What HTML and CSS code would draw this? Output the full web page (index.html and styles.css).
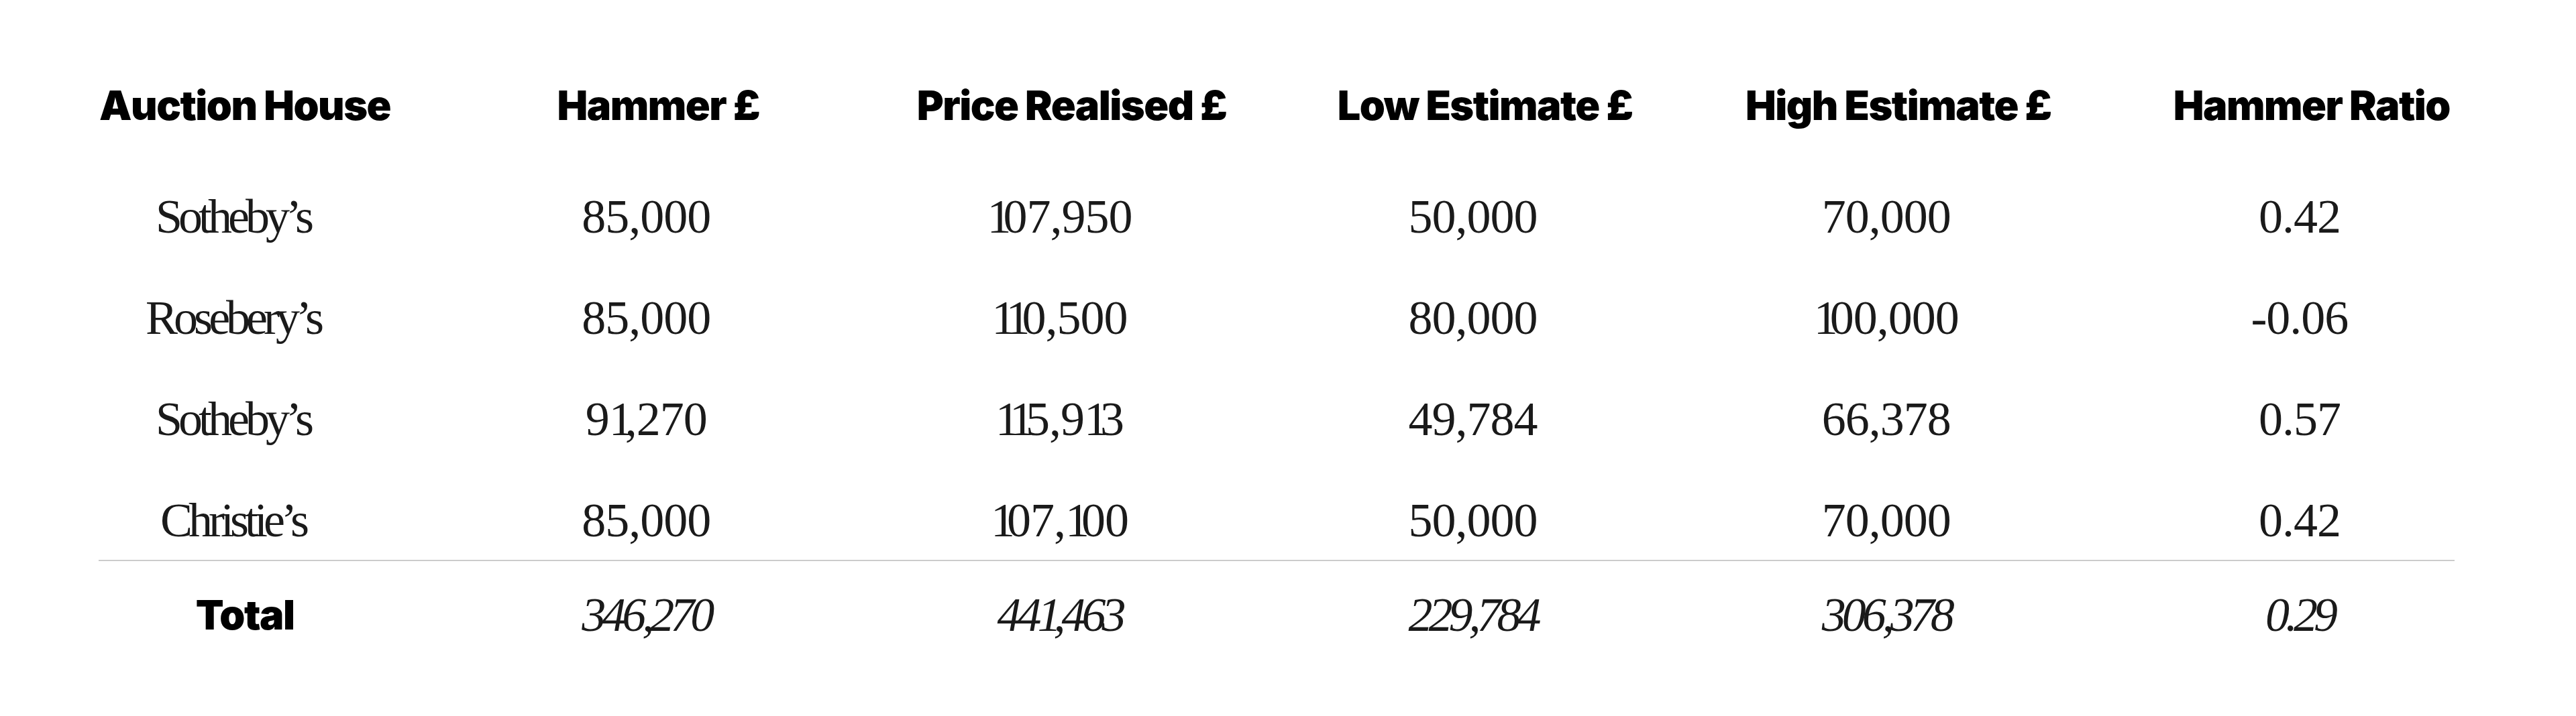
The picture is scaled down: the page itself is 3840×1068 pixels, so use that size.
FILE: index.html
```html
<!DOCTYPE html>
<html lang="en">
<head>
<meta charset="utf-8">
<title>Auction results</title>
<link rel="stylesheet" href="styles.css">
</head>
<body>
<table class="results">
  <thead>
    <tr>
      <th>Auction House</th>
      <th>Hammer £</th>
      <th>Price Realised £</th>
      <th>Low Estimate £</th>
      <th>High Estimate £</th>
      <th>Hammer Ratio</th>
    </tr>
  </thead>
  <tbody>
    <tr><td class="name">Sotheby’s</td><td>85,000</td><td><span class="one">1</span>07,950</td><td>50,000</td><td>70,000</td><td>0.42</td></tr>
    <tr><td class="name">Rosebery’s</td><td>85,000</td><td><span class="one">1</span><span class="one">1</span>0,500</td><td>80,000</td><td><span class="one">1</span>00,000</td><td>-0.06</td></tr>
    <tr><td class="name">Sotheby’s</td><td>9<span class="one">1</span>,270</td><td><span class="one">1</span><span class="one">1</span>5,9<span class="one">1</span>3</td><td>49,784</td><td>66,378</td><td>0.57</td></tr>
    <tr><td class="name">Christie’s</td><td>85,000</td><td><span class="one">1</span>07,<span class="one">1</span>00</td><td>50,000</td><td>70,000</td><td>0.42</td></tr>
  </tbody>
  <tfoot>
    <tr class="sep"><td colspan="6"><div class="rule"></div></td></tr>
    <tr class="total">
      <th>Total</th><td>346,270</td><td>44<span class="one">1</span>,463</td><td>229,784</td><td>306,378</td><td>0.29</td>
    </tr>
  </tfoot>
</table>
</body>
</html>
```

FILE: styles.css
```css
html, body {
  margin: 0;
  padding: 0;
  background: #fff;
}
.results {
  margin: 68px 0 0 57px;
  width: 3697px;
  table-layout: fixed;
  border-collapse: collapse;
  color: #1a1a1a;
}
.results th {
  font-family: Inter, "Open Sans", sans-serif;
  font-weight: 900;
  font-size: 61px;
  letter-spacing: -1.5px;
  line-height: 1;
  text-align: center;
  color: #000;
}
.results thead th {
  height: 179px;
  padding: 0;
  vertical-align: middle;
}
.results td {
  font-family: "Liberation Serif", serif;
  font-weight: 400;
  font-size: 72px;
  line-height: 1;
  letter-spacing: -1px;
  text-align: center;
  padding: 40px 36px 39px 0;
  vertical-align: middle;
}
.results td.name {
  letter-spacing: -6px;
}
.one {
  letter-spacing: -12px;
}
.results tbody tr:last-child td {
  padding-bottom: 23px;
}
.results .sep td {
  padding: 0;
}
.rule {
  margin: 0 95px 0 90px;
  border-top: 2px solid #cccccc;
}
.results .total td {
  font-style: italic;
  letter-spacing: -6px;
  padding-top: 44px;
  padding-bottom: 40px;
}
.results .total th {
  padding: 44px 0 40px;
}
```
